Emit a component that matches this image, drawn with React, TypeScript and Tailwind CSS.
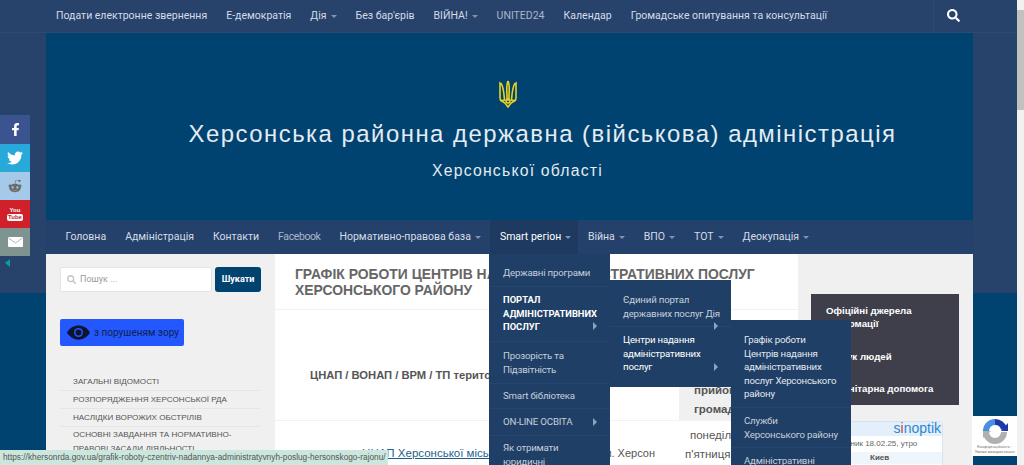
import { FaFacebookF, FaTwitter, FaRedditAlien, FaSearch } from "react-icons/fa";

const topLinks = [
    { label: "Подати електронне звернення" },
    { label: "Е-демократія" },
    { label: "Дія", caret: true },
    { label: "Без бар'єрів" },
    { label: "ВІЙНА!", caret: true },
    { label: "UNITED24", dim: true },
    { label: "Календар" },
    { label: "Громадське опитування та консультації" },
];

const mainLinks = [
    { label: "Головна" },
    { label: "Адміністрація" },
    { label: "Контакти" },
    { label: "Facebook", dim: true },
    { label: "Нормативно-правова база", caret: true },
    { label: "Smart регіон", caret: true, active: true },
    { label: "Війна", caret: true },
    { label: "ВПО", caret: true },
    { label: "ТОТ", caret: true },
    { label: "Деокупація", caret: true },
];

const sideMenu = ["ЗАГАЛЬНІ ВІДОМОСТІ", "РОЗПОРЯДЖЕННЯ ХЕРСОНСЬКОЇ РДА", "НАСЛІДКИ ВОРОЖИХ ОБСТРІЛІВ"];

function Caret() {
    return <span className="ml-[4px] inline-block border-x-[3px] border-t-[3px] border-x-transparent border-t-[#8093ad] align-middle"></span>;
}

function Arrow({ className }: { className: string }) {
    return <span className={`absolute border-y-[4px] border-l-[4px] border-y-transparent border-l-[#8fa3bd] ${className}`}></span>;
}

function Trident() {
    return (
        <svg width="20" height="28" viewBox="0 0 20 28" fill="none" stroke="#e8d420" strokeWidth="1.6">
            <path d="M10 1 C8.5 4 8.5 8 9 15 L9 21 M10 1 C11.5 4 11.5 8 11 15 L11 21" />
            <path d="M2 3 L2 18 C2 21 5 21 6.5 20 C6 16 6 9 3.5 4 Z" />
            <path d="M18 3 L18 18 C18 21 15 21 13.5 20 C14 16 14 9 16.5 4 Z" />
            <path d="M2 20 L7 23 L10 27 L13 23 L18 20" />
            <circle cx="10" cy="21" r="2" />
        </svg>
    );
}

export default function App() {
    return (
        <div className="relative flex h-[465px] w-[1024px] flex-col overflow-hidden bg-[#004270] font-['Roboto',sans-serif]">
            {/* page area without the scrollbar */}
            <div className="flex h-[293px] w-[1017px] flex-col bg-[#27426b]">
                <div className="flex h-[33px] shrink-0 items-center border-b border-[#2f4a72] pl-[56px]">
                    <div className="flex gap-[19px] whitespace-nowrap text-[10.5px] text-[#d5dce6]">
                        {topLinks.map((item) => (
                            <span key={item.label} className={item.dim ? "text-[#aab7c9]" : ""}>
                                {item.label}
                                {item.caret && <Caret />}
                            </span>
                        ))}
                    </div>
                    <div className="ml-auto flex h-[33px] w-[84px] items-center border-l border-[#2f4a72] pl-[13px] pb-[2px]">
                        <FaSearch className="text-[13px] text-white" />
                    </div>
                </div>

                <div className="mx-[46px] flex w-[927px] flex-col">
                    <div className="flex h-[187px] flex-col items-center bg-[#004270] pt-[47px] font-['Liberation_Sans',sans-serif] text-[#e4ebf1]">
                        <div className="mr-[3px]"><Trident /></div>
                        <div className="mt-[11px] whitespace-nowrap pl-[66px] text-[23.9px] leading-[30px] tracking-[1.5px]">Херсонська районна державна (військова) адміністрація</div>
                        <div className="mt-[12px] pl-[16px] text-[15.8px] leading-[20px] tracking-[1.2px]">Херсонської області</div>
                    </div>

                    <div className="flex h-[34px] items-center whitespace-nowrap bg-[#24416b] pl-[10px] text-[10.5px] text-[#d5dce6]">
                        {mainLinks.map((item) => (
                            <span
                                key={item.label}
                                className={`flex h-[34px] items-center pl-[9.5px] ${item.active ? "bg-[#1e3a60] pr-[7px] text-white" : "pr-[9.5px]"} ${item.dim ? "tracking-[-0.4px] text-[#aab7c9]" : ""}`}
                            >
                                {item.label}
                                {item.caret && <Caret />}
                            </span>
                        ))}
                    </div>

                    <div className="flex h-[211px]">
                        <div className="w-[229px] shrink-0 bg-[#f0f0f0] pl-[14px] pt-[13px]">
                            <div className="flex gap-[3px]">
                                <div className="flex h-[25px] w-[152px] items-center rounded-[2px] border border-[#e4e4e4] bg-white pl-[6px] text-[9px] text-[#9a9a9a]">
                                    <FaSearch className="mr-[4px] text-[9px] text-[#c5c5c5]" />
                                    Пошук ...
                                </div>
                                <div className="flex h-[25px] w-[46px] items-center justify-center rounded-[3px] bg-[#004270] text-[9px] font-bold text-white">Шукати</div>
                            </div>
                            <div className="mt-[27px] flex h-[27px] w-[124px] items-center whitespace-nowrap rounded-[2px] bg-[#2458ff] pl-[7px] text-[10px] text-[#102050]">
                                <svg width="23" height="15" viewBox="0 0 23 15" className="mr-[4px] shrink-0">
                                    <path d="M0 7.5 C5 -2 18 -2 23 7.5 C18 17 5 17 0 7.5 Z" fill="#0d1430" />
                                    <circle cx="11.5" cy="7.5" r="4.5" fill="#2458ff" />
                                    <circle cx="11.5" cy="7.5" r="3" fill="#0d1430" />
                                </svg>
                                з порушеням зору
                            </div>
                            <div className="mt-[27px] w-[201px] font-['Liberation_Sans',sans-serif] text-[8.1px] text-[#555]">
                                {sideMenu.map((item) => (
                                    <div key={item} className="flex h-[18px] items-center border-b border-[#e6e6e6] pl-[13px] pt-[1px]">{item}</div>
                                ))}
                                <div className="pl-[13px] pt-[1px] leading-[14px]">ОСНОВНІ ЗАВДАННЯ ТА НОРМАТИВНО-<br />ПРАВОВІ ЗАСАДИ ДІЯЛЬНОСТІ</div>
                            </div>
                        </div>

                        <div className="w-[523px] shrink-0 bg-white font-['Liberation_Sans',sans-serif]">
                            <div className="h-[56px] border-b border-[#f2f2f2] pl-[20px] pt-[12px] text-[13.9px] font-bold leading-[16px] text-[#666]">
                                ГРАФІК РОБОТИ ЦЕНТРІВ НАДАННЯ АДМІНІСТРАТИВНИХ ПОСЛУГ<br />ХЕРСОНСЬКОГО РАЙОНУ
                            </div>
                            <div className="flex h-[111px] border-b border-[#f2f2f2] pl-[35px]">
                                <div className="w-[369px] whitespace-nowrap pt-[57px] text-[11.2px] font-bold text-[#555]">ЦНАП / ВОНАП / ВРМ / ТП територіальних</div>
                                <div className="mt-[21px] w-[119px] bg-[#f0f0f0] pl-[15px] pt-[50px] text-[11.5px] font-bold leading-[19px] text-[#555]">
                                    прийому<br />громад
                                </div>
                            </div>
                            <div className="flex pl-[87px] pt-[5px] text-[11.5px] text-[#555]">
                                <div className="flex w-[293px] whitespace-nowrap pt-[19px]">
                                    <span className="text-[#1d5f8a] underline">ЦНАП Херсонської міської</span>
                                    <span className="ml-auto text-[11px]">м. Херсон</span>
                                </div>
                                <div className="whitespace-nowrap pl-[30px] leading-[19px]">
                                    <div className="pl-[5px]">понеділок</div>
                                    <div>п'ятниця:</div>
                                </div>
                            </div>
                        </div>

                        <div className="w-[175px] shrink-0 bg-[#f0f0f0] pl-[13px] pt-[40px] font-['Liberation_Sans',sans-serif]">
                            <div className="h-[111px] w-[148px] bg-[#3e3f4a] pl-[15px] pt-[10px] text-[9.7px] font-bold leading-[13px] text-white">
                                <div>Офіційні джерела</div>
                                <div>інформації</div>
                                <div className="mt-[20px]">Пошук людей</div>
                                <div className="mt-[19px]">Гуманітарна допомога</div>
                            </div>
                            <div className="mt-[16px] h-[60px] w-[132px] overflow-hidden rounded-t-[3px] border border-[#d5e4f2] bg-white">
                                <div className="h-[14px] bg-[#e3f0fb] pr-[1px] text-right text-[14px] leading-[13px] text-[#2f86cf]">
                                    s<span className="text-[#d33a3a]">i</span>noptik
                                </div>
                                <div className="mt-[3px] whitespace-nowrap pl-[22px] text-[8px] leading-[10px] text-[#666]">вторник 18.02.25, утро</div>
                                <div className="mt-[3px] bg-[#eef5fb] pl-[58px] text-[8px] font-bold leading-[12px] text-[#555]">Киев</div>
                            </div>
                        </div>
                    </div>
                </div>
            </div>

            {/* scrollbar */}
            <div className="absolute right-0 top-0 h-[465px] w-[7px] bg-[#f1f1f1]">
                <div className="mt-[10px] h-[100px] w-[7px] bg-[#c1c1c1]"></div>
            </div>

            {/* social buttons */}
            <div className="absolute left-0 top-[115px] w-[30px] text-white">
                <div className="flex h-[29px] items-center justify-center bg-[#3b5490] text-[13px]"><FaFacebookF /></div>
                <div className="flex h-[28px] items-center justify-center bg-[#29a9d9] text-[16px]"><FaTwitter /></div>
                <div className="flex h-[28px] items-center justify-center bg-[#a5c9e8] text-[14px] text-[#6a6a6a]"><FaRedditAlien /></div>
                <div className="flex h-[28px] flex-col items-center justify-center bg-[#d0202a] font-['Liberation_Sans',sans-serif] text-[6px] font-bold leading-[7px]">
                    <span>You</span>
                    <span className="rounded-[2px] bg-white px-[1px] text-[#d0202a]">Tube</span>
                </div>
                <div className="flex h-[28px] items-center justify-center bg-[#7f9490]">
                    <svg width="15" height="10" viewBox="0 0 15 10">
                        <rect width="15" height="10" rx="1" fill="#fff" />
                        <path d="M0.5 1 L7.5 6 L14.5 1" fill="none" stroke="#9aa9a6" strokeWidth="0.8" />
                    </svg>
                </div>
                <div className="ml-[5px] mt-[3px] h-0 w-0 border-y-[4px] border-r-[5px] border-y-transparent border-r-[#0e9c98]"></div>
            </div>

            {/* dropdown menus */}
            <div className="absolute left-[489px] top-[254px] h-[211px] w-[121px] bg-[#1f3f66] text-[9.7px] leading-[13.5px] tracking-[-0.2px] text-[#c5cfdb]">
                <div className="flex h-[33px] items-center border-b border-[#254670] pl-[14px] pt-[6px]">Державні програми</div>
                <div className="relative h-[55px] border-b border-[#254670] pl-[14px] pt-[6px] text-[9.4px] font-bold tracking-normal text-white">
                    ПОРТАЛ<br />АДМІНІСТРАТИВНИХ<br />ПОСЛУГ
                    <Arrow className="bottom-[11px] right-[13px]" />
                </div>
                <div className="flex h-[42px] items-center border-b border-[#254670] pl-[14px]"><span>Прозорість та<br />Підзвітність</span></div>
                <div className="flex h-[25px] items-center border-b border-[#254670] pl-[14px]">Smart бібліотека</div>
                <div className="relative flex h-[27px] items-center border-b border-[#254670] pl-[14px]">
                    ON-LINE ОСВІТА
                    <Arrow className="right-[13px] top-[9px]" />
                </div>
                <div className="pl-[14px] pt-[5px]">Як отримати<br />юридичні</div>
            </div>

            <div className="absolute left-[610px] top-[280px] h-[107px] w-[121px] bg-[#1f3f66] text-[9.7px] leading-[13.5px] tracking-[-0.2px] text-[#c5cfdb]">
                <div className="relative h-[47px] whitespace-nowrap border-b border-[#254670] pl-[13px] pt-[13px]">
                    Єдиний портал<br />державних послуг Дія
                    <Arrow className="bottom-[-4px] right-[13px]" />
                </div>
                <div className="relative pl-[13px] pt-[6px] text-white">
                    Центри надання<br />адміністративних<br />послуг
                    <Arrow className="bottom-[3px] right-[13px]" />
                </div>
            </div>

            <div className="absolute left-[731px] top-[320px] h-[145px] w-[120px] bg-[#1f3f66] text-[9.7px] leading-[13.5px] tracking-[-0.2px] text-[#c5cfdb]">
                <div className="h-[88px] border-b border-[#254670] pl-[13px] pt-[13px] text-[#e3e8ee]">
                    Графік роботи<br />Центрів надання<br />адміністративних<br />послуг Херсонського<br />району
                </div>
                <div className="h-[40px] border-b border-[#254670] pl-[13px] pt-[6px]">Служби<br />Херсонського району</div>
                <div className="pl-[13px] pt-[6px]">Адміністративні</div>
            </div>

            {/* recaptcha badge */}
            <div className="absolute left-[972px] top-[416px] flex h-[40px] w-[45px] flex-col items-center bg-white pt-[2px]">
                <svg width="26" height="26" viewBox="0 0 26 26" fill="none">
                    <path d="M4 14 A9 9 0 0 1 13 4" stroke="#4a90e2" strokeWidth="6" />
                    <path d="M13 4 A9 9 0 0 1 22 11" stroke="#1c3aa9" strokeWidth="6" />
                    <path d="M22 14 A9 9 0 0 1 4 14" stroke="#b0b0b0" strokeWidth="6" />
                    <path d="M19 13 L26 13 L26 5 Z" fill="#1c3aa9" />
                    <path d="M1 13 L9 13 L1 20 Z" fill="#b0b0b0" />
                </svg>
                <span className="text-center text-[4px] leading-[5px] text-[#777]">Конфіденційність - Умови використання</span>
            </div>

            {/* browser status bar */}
            <div className="absolute bottom-0 left-0 flex h-[15px] w-[388px] items-center whitespace-nowrap bg-[#cbe6dd] pl-[3px] font-['Liberation_Sans',sans-serif] text-[8.3px] text-[#555]">
                https://khersonrda.gov.ua/grafik-roboty-czentriv-nadannya-administratyvnyh-poslug-hersonskogo-rajonu/
            </div>
        </div>
    );
}
